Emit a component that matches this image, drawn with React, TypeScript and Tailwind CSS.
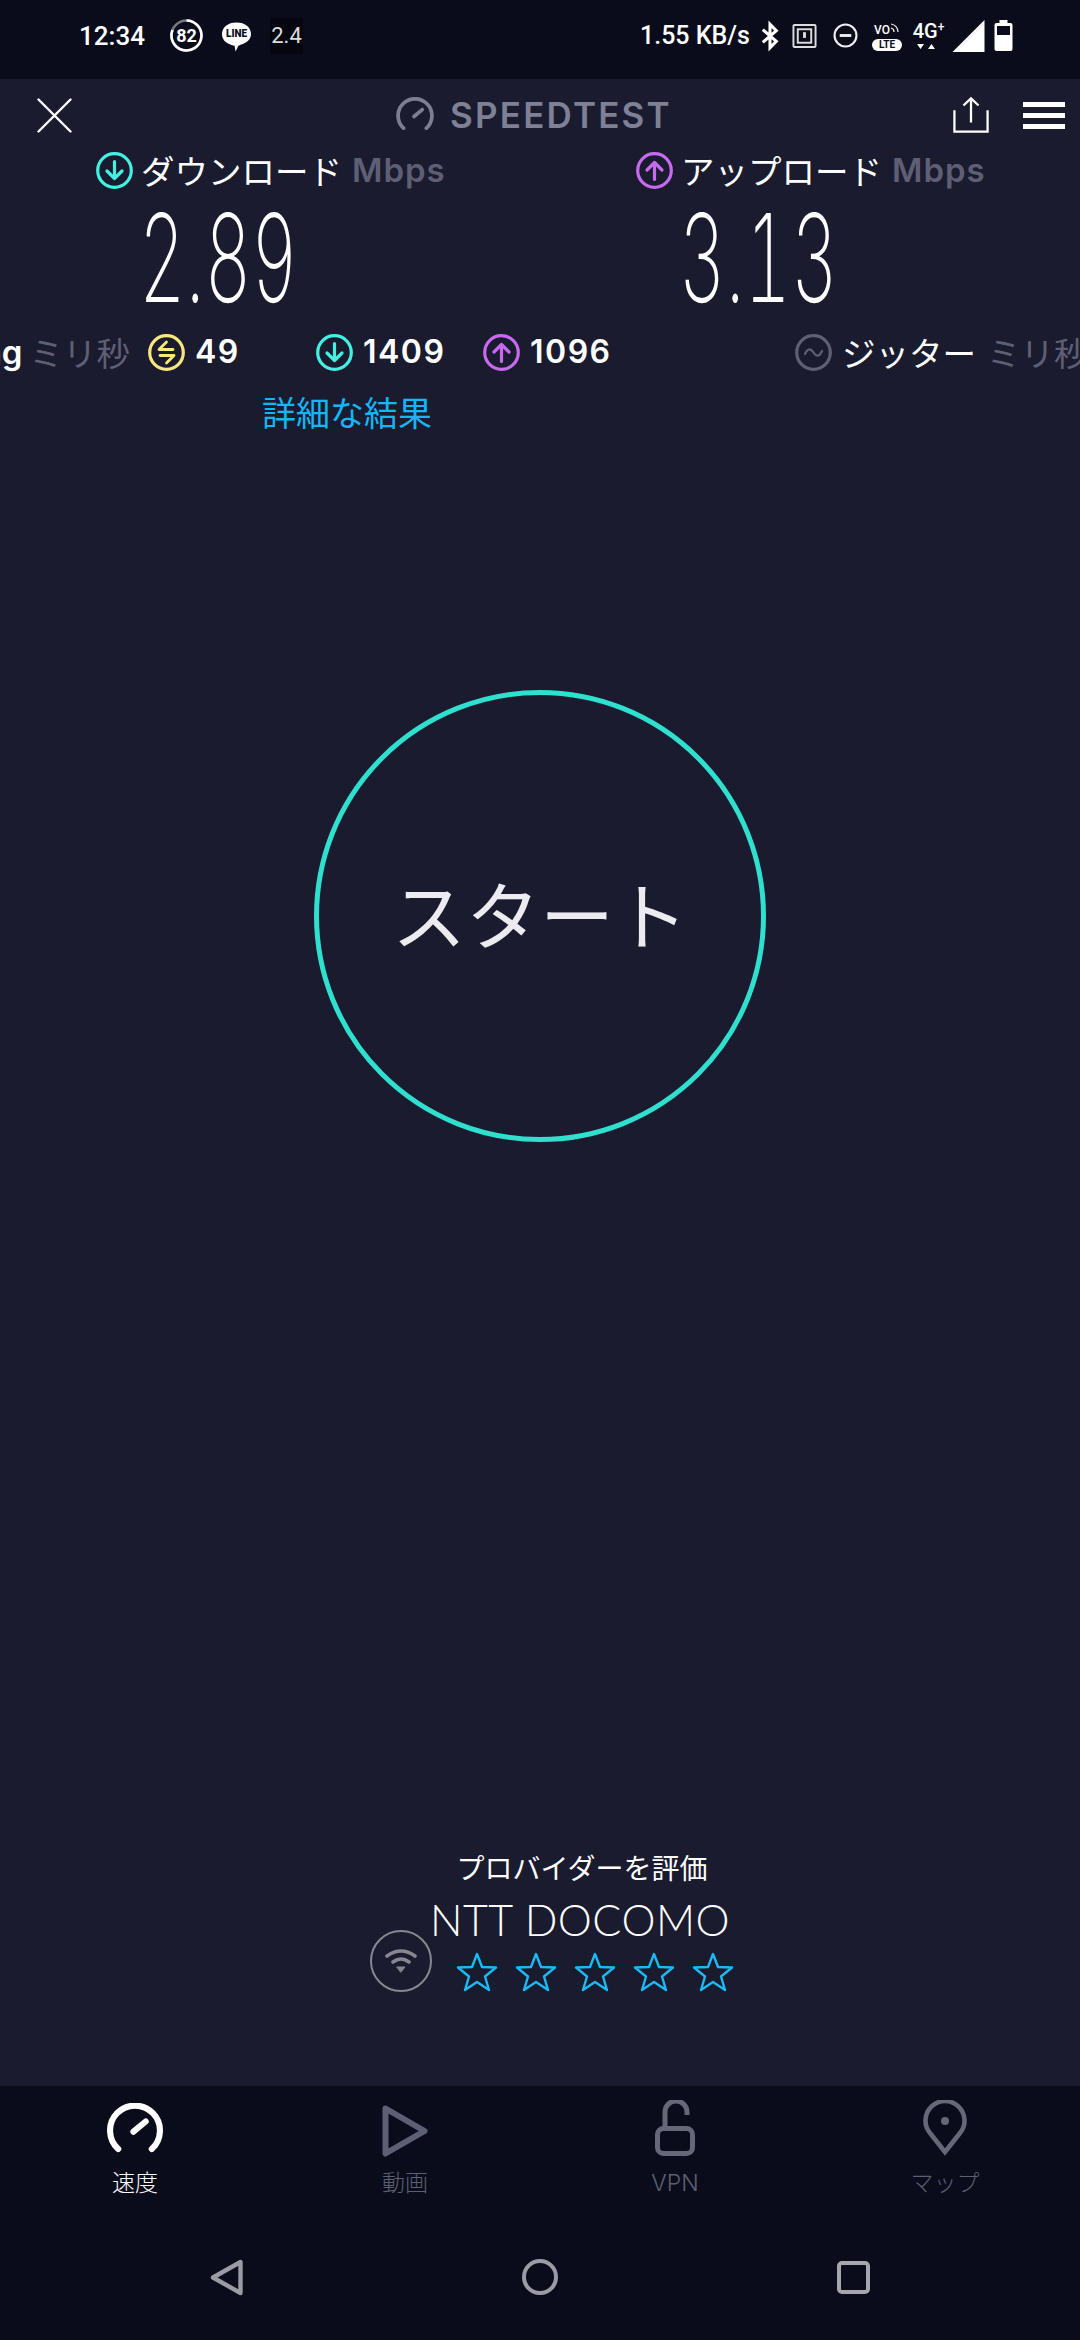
const jp = "font-['Noto_Sans_CJK_JP',sans-serif]";
const lat = "font-['Lato','Noto_Sans_CJK_JP',sans-serif]";
const inter = "font-['Inter','Noto_Sans_CJK_JP',sans-serif]";
const rb = "font-['Roboto',sans-serif]";

function Gauge({ size, color, sw }: { size: number; color: string; sw: number }) {
  return (
    <svg width={size} height={size * 0.88} viewBox="0 0 55 48" fill="none" stroke={color} strokeWidth={sw} strokeLinecap="round">
      <path d="M11 45 A24.5 24.5 0 1 1 44 45" />
      <path d="M26 28 L38 18" />
    </svg>
  );
}

function Circ({ color, kind }: { color: string; kind: "down" | "up" | "ping" | "jit" }) {
  return (
    <svg width="37" height="37" viewBox="0 0 37 37" fill="none" stroke={color} strokeWidth="3.2" strokeLinecap="round" strokeLinejoin="round" className="shrink-0">
      <circle cx="18.5" cy="18.5" r="16.8" />
      {kind === "down" && <path d="M18.5 9.5 V26.5 M11 19 L18.5 26.5 L26 19" />}
      {kind === "up" && <path d="M18.5 27.5 V10.5 M11 18 L18.5 10.5 L26 18" />}
      {kind === "ping" && <path d="M25 15.5 H11 L18.5 8 M12 21.5 H26 L18.5 29" strokeWidth="2.8" />}
      {kind === "jit" && <path d="M10 20 C13 13.5 16 14.5 18.5 18.5 C21 22.5 24 23.5 27 17" strokeWidth="2.2" />}
    </svg>
  );
}

function Star() {
  return (
    <svg width="42" height="40" viewBox="0 0 42 40" fill="none" stroke="#1bb9f5" strokeWidth="2.4" strokeLinejoin="round" className="shrink-0">
      <polygon points="21,2 26,15 40,15.5 29,24.5 33,38 21,30 9,38 13,24.5 2,15.5 16,15" />
    </svg>
  );
}

function Stat({ label, color, kind }: { label: string; color: string; kind: "down" | "up" }) {
  return (
    <div className="flex items-center h-[38px] pl-[96px]">
      <Circ color={color} kind={kind} />
      <span className={`${jp} ml-[8px] w-[211px] text-[33.5px] leading-none font-normal text-white whitespace-nowrap`}>{label}</span>
      <span className={`${inter} text-[33px] leading-none font-semibold text-[#5e5f74] tracking-[1px]`}>Mbps</span>
    </div>
  );
}

function Big({ v }: { v: string }) {
  return (
    <div className="h-[100px] mt-[19px] pl-[139px] flex items-center">
      <span className={`${inter} font-extralight tabular-nums text-[122px] leading-none text-white origin-left scale-x-[0.59] whitespace-nowrap inline-block`}>{v}</span>
    </div>
  );
}

function Tab({ label, active, children }: { label: string; active?: boolean; children: React.ReactNode }) {
  return (
    <div className="flex flex-col items-center">
      <div className="h-[60px] flex items-center justify-center">{children}</div>
      <span className={`${inter} mt-[10px] text-[23px] leading-[30px] font-light ${active ? "text-white" : "text-[#5d5f73]"}`}>{label}</span>
    </div>
  );
}

export default function App() {
  return (
    <div className="w-[1080px] h-[2340px] overflow-hidden flex flex-col bg-[#1a1b2e] text-white">
      {/* status bar */}
      <div className="h-[79px] shrink-0 bg-[#0a0c1b] flex items-center pb-[8px]">
        <span className={`${rb} ml-[79px] w-[91px] text-[26px] font-medium leading-none`}>12:34</span>
        <div className="relative w-[33px] h-[33px] flex items-center justify-center shrink-0">
          <svg width="33" height="33" viewBox="0 0 33 33" fill="none" className="absolute inset-0">
            <circle cx="16.5" cy="16.5" r="15" stroke="#777" strokeWidth="2.6" />
            <path d="M16.5 1.5 A15 15 0 1 1 2.5 11" stroke="#fff" strokeWidth="2.6" />
          </svg>
          <span className={`${rb} text-[18px] font-bold leading-none`}>82</span>
        </div>
        <div className="relative ml-[18px] w-[31px] h-[32px] flex items-center justify-center shrink-0">
          <svg width="31" height="32" viewBox="0 0 32 32" className="absolute inset-0">
            <path d="M16 2 C25 2 31 7 31 14 C31 21 24 24 18 26 L15 32 L14 26 C7 25 1 21 1 14 C1 7 7 2 16 2 Z" fill="#fff" />
          </svg>
          <span className={`${rb} relative -mt-[4px] text-[10px] font-black leading-none text-[#0a0c1b]`}>LINE</span>
        </div>
        <span className={`${rb} ml-[18px] w-[33px] shrink-0 text-[22px] leading-[36px] text-[#ddd] bg-[#05060f] text-center`}>2.4</span>
        <span className={`${rb} ml-[337px] w-[121px] shrink-0 text-[25px] font-medium leading-none whitespace-nowrap`}>1.55 KB/s</span>
        <svg width="18" height="32" viewBox="0 0 20 32" fill="none" stroke="#fff" strokeWidth="3.4" className="shrink-0">
          <path d="M2 9 L17 22 L10 29 V3 L17 10 L2 23" />
        </svg>
        <svg width="25" height="26" viewBox="0 0 26 26" fill="none" stroke="#ddd" strokeWidth="2" className="ml-[13px] shrink-0">
          <rect x="1.5" y="1.5" width="23" height="23" rx="1" />
          <rect x="6" y="6" width="14" height="14" />
          <path d="M13 9 V15" strokeWidth="3" />
        </svg>
        <svg width="25" height="25" viewBox="0 0 26 26" fill="none" stroke="#eee" strokeWidth="2.2" className="ml-[16px] shrink-0">
          <circle cx="13" cy="13" r="11.4" />
          <path d="M7 13 H19" strokeWidth="3" />
        </svg>
        <div className="ml-[14px] w-[30px] shrink-0 flex flex-col items-center">
          <div className="flex items-start h-[16px]">
            <span className={`${rb} text-[12px] font-medium leading-none mt-[3px]`}>VO</span>
            <svg width="10" height="12" viewBox="0 0 10 12" fill="none" stroke="#eee" strokeWidth="1.2"><path d="M1 7 A4 4 0 0 1 4 11 M1 3 A8 8 0 0 1 8 11" /></svg>
          </div>
          <span className={`${rb} mt-[2px] w-[30px] h-[12px] rounded-[6px] bg-white text-[#0a0c1b] text-[10px] leading-[12px] font-bold text-center`}>LTE</span>
        </div>
        <div className="ml-[10px] w-[33px] shrink-0 flex flex-col items-center">
          <span className={`${rb} text-[20px] font-medium leading-none whitespace-nowrap`}>4G<span className="text-[12px] align-top">+</span></span>
          <svg width="18" height="8" viewBox="0 0 18 8" fill="#fff" className="mt-[2px] -ml-[6px]"><path d="M0 1 H7 L3.5 6 Z M11 6 H18 L14.5 1 Z" /></svg>
        </div>
        <svg width="33" height="32" viewBox="0 0 32 32" className="ml-[7px] shrink-0"><path d="M0 32 L32 0 V32 Z" fill="#fff" /></svg>
        <svg width="19" height="31" viewBox="0 0 18 31" className="ml-[9px] shrink-0">
          <path d="M5 0 H13 V3 H16 Q18 3 18 5 V29 Q18 31 16 31 H2 Q0 31 0 29 V5 Q0 3 2 3 H5 Z" fill="#fff" />
          <rect x="2.5" y="6" width="13" height="9" fill="#0a0c1b" />
        </svg>
      </div>

      {/* main */}
      <div className="flex-1 flex flex-col">
        {/* header */}
        <div className="h-[72px] flex items-center">
          <svg width="35" height="35" viewBox="0 0 35 35" stroke="#fff" strokeWidth="2.4" strokeLinecap="round" className="ml-[37px] shrink-0">
            <path d="M1.5 1.5 L33.5 33.5 M33.5 1.5 L1.5 33.5" />
          </svg>
          <div className="ml-[324px] mt-[-3px]"><Gauge size={38} color="#7c7e93" sw={5.4} /></div>
          <span className={`${inter} ml-[16px] text-[35px] leading-none font-semibold tracking-[2.2px] text-[#7e8096]`}>SPEEDTEST</span>
          <svg width="36" height="38" viewBox="0 0 38 38" fill="none" stroke="#fff" strokeWidth="2.4" className="ml-[281px] shrink-0">
            <path d="M1.5 14 V36.5 H36.5 V14 M19 27 V2 M11 9 L19 1.5 L27 9" />
          </svg>
          <div className="ml-[34px] w-[42px] flex flex-col gap-[6px]">
            <div className="h-[5px] bg-white" />
            <div className="h-[5px] bg-white" />
            <div className="h-[5px] bg-white" />
          </div>
        </div>

        {/* speed columns */}
        <div className="grid grid-cols-2">
          <div>
            <Stat label="ダウンロード" color="#44f0e0" kind="down" />
            <Big v="2.89" />
          </div>
          <div>
            <Stat label="アップロード" color="#c86af0" kind="up" />
            <Big v="3.13" />
          </div>
        </div>

        {/* secondary stats */}
        <div className="mt-[25px] h-[38px] flex items-center">
          <div className="w-[130px] shrink-0 flex justify-end items-center whitespace-nowrap">
            <span className={`${inter} text-[33px] font-semibold leading-none mr-[7px]`}>Ping</span>
            <span className={`${jp} text-[33.5px] font-normal leading-none text-[#5e5f74]`}>ミリ秒</span>
          </div>
          <div className="ml-[18px] w-[148px] shrink-0 flex items-center gap-[10px]">
            <Circ color="#f8e77c" kind="ping" />
            <span className={`${inter} text-[32px] font-semibold tracking-[1.5px] leading-none`}>49</span>
          </div>
          <div className="ml-[20px] w-[147px] shrink-0 flex items-center gap-[10px]">
            <Circ color="#44f0e0" kind="down" />
            <span className={`${inter} text-[32px] font-semibold tracking-[1.5px] leading-none`}>1409</span>
          </div>
          <div className="ml-[20px] w-[147px] shrink-0 flex items-center gap-[10px]">
            <Circ color="#c86af0" kind="up" />
            <span className={`${inter} text-[32px] font-semibold tracking-[1.5px] leading-none`}>1096</span>
          </div>
          <div className="ml-[165px] shrink-0 flex items-center whitespace-nowrap">
            <Circ color="#5e5f74" kind="jit" />
            <span className={`${jp} ml-[10px] text-[33.5px] font-normal leading-none`}>ジッター</span>
            <span className={`${jp} ml-[11px] text-[33.5px] font-normal leading-none text-[#5e5f74]`}>ミリ秒</span>
          </div>
        </div>

        <div className={`${jp} mt-[21px] h-[40px] pl-[262px] text-[34px] leading-[40px] font-normal text-[#14b6f5]`}>詳細な結果</div>

        {/* start */}
        <div className="mt-[258px] flex justify-center">
          <div className="w-[452px] h-[452px] rounded-full border-[5px] border-[#2fe0cf] flex items-center justify-center pb-[9px]">
            <span className={`${jp} text-[74px] leading-none font-normal text-[#ececf0] whitespace-nowrap`}>スタート</span>
          </div>
        </div>

        {/* provider */}
        <div className={`${jp} mt-[707px] h-[36px] pl-[84px] flex items-center justify-center text-[28px] leading-none font-normal`}>プロバイダーを評価</div>
        <div className={`${lat} mt-[14px] h-[40px] pl-[80px] flex items-center justify-center text-[43px] leading-none font-light tracking-[0.5px]`}>NTT DOCOMO</div>
        <div className="-mt-[9px] pl-[370px] flex items-end">
          <div className="w-[62px] h-[62px] rounded-full border-[2px] border-[#86878f] flex items-center justify-center shrink-0">
            <svg width="32" height="26" viewBox="0 0 32 26" fill="none" stroke="#86878f" strokeWidth="3.6" strokeLinecap="round">
              <path d="M2 8 Q16 -2 30 8 M8 14 Q16 8 24 14" />
              <path d="M12 19 L20 19 L16 24 Z" fill="#86878f" strokeWidth="1" />
            </svg>
          </div>
          <div className="ml-[24px] flex gap-[17px]"><Star /><Star /><Star /><Star /><Star /></div>
        </div>
      </div>

      {/* bottom nav */}
      <div className="h-[254px] shrink-0 bg-[#0a0c1b] flex flex-col">
        <div className="grid grid-cols-4 pt-[12px]">
          <Tab label="速度" active><Gauge size={56} color="#fff" sw={6} /></Tab>
          <Tab label="動画">
            <svg width="46" height="52" viewBox="0 0 46 52" fill="none" stroke="#5d5f75" strokeWidth="6" strokeLinejoin="round" className="mt-[5px]"><path d="M3.5 3.5 L42.5 26 L3.5 48.5 Z" /></svg>
          </Tab>
          <Tab label="VPN">
            <svg width="40" height="56" viewBox="0 0 40 56" fill="none" stroke="#666879" strokeWidth="5" strokeLinecap="butt"><rect x="2.5" y="28.5" width="35" height="25" rx="6" /><path d="M10 27 V12 A10 10 0 0 1 32 12 V15" /></svg>
          </Tab>
          <Tab label="マップ">
            <svg width="44" height="56" viewBox="0 0 44 56" fill="none" stroke="#666879" strokeWidth="4.6"><path d="M22 52 L7 33 A19.5 19.5 0 1 1 37 33 Z" strokeLinejoin="miter" /><circle cx="22" cy="21" r="4" fill="#666879" stroke="none" /></svg>
          </Tab>
        </div>
        <div className="grid grid-cols-3 px-[70px] mt-[60px]">
          <div className="flex justify-center h-[38px] items-center">
            <svg width="34" height="37" viewBox="0 0 34 37" fill="none" stroke="#9a9ba4" strokeWidth="4.4" strokeLinejoin="round"><path d="M30.5 3 V34 L3 18.5 Z" /></svg>
          </div>
          <div className="flex justify-center h-[38px] items-center">
            <div className="w-[36px] h-[36px] rounded-full border-[4.4px] border-[#9a9ba4]" />
          </div>
          <div className="flex justify-center h-[38px] items-center">
            <div className="w-[33px] h-[33px] rounded-[5px] border-[4.4px] border-[#a5a6ae]" />
          </div>
        </div>
      </div>
    </div>
  );
}
